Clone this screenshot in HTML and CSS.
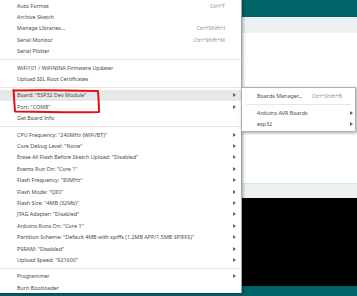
FILE: index.html
```html
<!DOCTYPE html>
<html lang="en">
<head>
    <meta charset="UTF-8">
    <meta name="viewport" content="width=device-width, initial-scale=1.0">
    <title>Tools menu</title>
    <link rel="stylesheet" href="styles.css">
</head>
<body>
    <!-- IDE window behind the menus -->
    <div class="app">
        <div class="app-header"></div>
        <div class="app-toolbar"></div>
        <div class="app-editor"></div>
        <div class="app-console-bar"></div>
        <div class="app-console"></div>
        <div class="app-status"></div>
    </div>

    <!-- Tools menu -->
    <div class="menu main-menu">
        <div class="item"><span class="label">Auto Format</span><span class="shortcut">Ctrl+T</span><span class="arrow"></span></div>
        <div class="item"><span class="label">Archive Sketch</span><span class="arrow"></span></div>
        <div class="item"><span class="label">Manage Libraries...</span><span class="shortcut">Ctrl+Shift+I</span><span class="arrow"></span></div>
        <div class="item"><span class="label">Serial Monitor</span><span class="shortcut">Ctrl+Shift+M</span><span class="arrow"></span></div>
        <div class="item"><span class="label">Serial Plotter</span><span class="arrow"></span></div>
        <div class="separator"></div>
        <div class="item"><span class="label">WiFi101 / WiFiNINA Firmware Updater</span><span class="arrow"></span></div>
        <div class="item"><span class="label">Upload SSL Root Certificates</span><span class="arrow"></span></div>
        <div class="separator"></div>
        <div class="item active"><span class="label">Board: "ESP32 Dev Module"</span><span class="arrow sub"></span></div>
        <div class="item"><span class="label">Port: "COM8"</span><span class="arrow sub"></span></div>
        <div class="item"><span class="label">Get Board Info</span><span class="arrow"></span></div>
        <div class="separator"></div>
        <div class="item"><span class="label">CPU Frequency: "240MHz (WiFi/BT)"</span><span class="arrow sub"></span></div>
        <div class="item"><span class="label">Core Debug Level: "None"</span><span class="arrow sub"></span></div>
        <div class="item"><span class="label">Erase All Flash Before Sketch Upload: "Disabled"</span><span class="arrow sub"></span></div>
        <div class="item"><span class="label">Events Run On: "Core 1"</span><span class="arrow sub"></span></div>
        <div class="item"><span class="label">Flash Frequency: "80MHz"</span><span class="arrow sub"></span></div>
        <div class="item"><span class="label">Flash Mode: "QIO"</span><span class="arrow sub"></span></div>
        <div class="item"><span class="label">Flash Size: "4MB (32Mb)"</span><span class="arrow sub"></span></div>
        <div class="item"><span class="label">JTAG Adapter: "Disabled"</span><span class="arrow sub"></span></div>
        <div class="item"><span class="label">Arduino Runs On: "Core 1"</span><span class="arrow sub"></span></div>
        <div class="item"><span class="label">Partition Scheme: "Default 4MB with spiffs (1.2MB APP/1.5MB SPIFFS)"</span><span class="arrow sub"></span></div>
        <div class="item"><span class="label">PSRAM: "Disabled"</span><span class="arrow sub"></span></div>
        <div class="item"><span class="label">Upload Speed: "921600"</span><span class="arrow sub"></span></div>
        <div class="separator"></div>
        <div class="item"><span class="label">Programmer</span><span class="arrow sub"></span></div>
        <div class="item"><span class="label">Burn Bootloader</span><span class="arrow"></span></div>
    </div>

    <!-- Board submenu -->
    <div class="menu sub-menu">
        <div class="item"><span class="label">Boards Manager...</span><span class="shortcut">Ctrl+Shift+B</span><span class="arrow"></span></div>
        <div class="separator"></div>
        <div class="item"><span class="label">Arduino AVR Boards</span><span class="arrow sub"></span></div>
        <div class="item"><span class="label">esp32</span><span class="arrow sub"></span></div>
    </div>

    <!-- red marker drawn over the screenshot -->
    <svg class="annotation" width="357" height="296" viewBox="0 0 357 296">
        <path d="M14 90.5 C40 90 75 90.5 98 91 C98.5 98 99 105 99 112 C75 112.5 40 112 15 111.5 C14.5 104 14 97 13.5 90" fill="none" stroke="#e3101c" stroke-width="2" stroke-linecap="round" stroke-linejoin="round"/>
    </svg>
</body>
</html>
```

FILE: styles.css
```css
body {
    margin: 0;
    width: 357px;
    height: 296px;
    overflow: hidden;
    position: relative;
    font-family: "Noto Sans", "Open Sans", sans-serif;
    background-color: #fff;
}

/* IDE background */
.app {
    display: flex;
    flex-direction: column;
    height: 296px;
}

.app-header {
    height: 17px;
    background-color: #006468;
}

.app-toolbar {
    height: 16px;
    background-color: #ecf1f1;
}

.app-editor {
    height: 150px;
    background-color: #fff;
}

.app-console-bar {
    height: 14px;
    background-color: #ecf1f1;
    border-top: 1px solid #dde4e4;
}

.app-console {
    height: 88px;
    background-color: #000;
}

.app-status {
    height: 10px;
    background-color: #006468;
}

/* menus */
.menu {
    position: absolute;
    background-color: #fff;
    box-shadow: 1px 1px 3px rgba(0,0,0,0.35);
    font-size: 5.4px;
    color: #4a4a4a;
}

.main-menu {
    left: 0;
    top: 0;
    width: 241px;
    border-right: 1px solid #a3a3a3;
}

.sub-menu {
    left: 241px;
    top: 87px;
    width: 113px;
    padding: 2.5px 0 1.5px;
    border: 1px solid #b0b0b0;
}

.item {
    display: flex;
    align-items: center;
    height: 11.4px;
    padding: 0 3px 0 17px;
    white-space: nowrap;
}

.sub-menu .item {
    padding: 0 0 0 15px;
}

.item.active {
    background-color: #e8e8e8;
}

.label {
    flex: 1;
}

.shortcut {
    color: #929292;
}

.arrow {
    width: 10px;
    height: 11px;
    position: relative;
    margin-left: 3px;
}

.arrow.sub::after {
    content: "";
    position: absolute;
    left: 5px;
    top: 3.5px;
    border-left: 3px solid #666;
    border-top: 2px solid transparent;
    border-bottom: 2px solid transparent;
}

.separator {
    height: 5px;
    position: relative;
}

.separator::after {
    content: "";
    position: absolute;
    left: 0;
    right: 0;
    top: 2px;
    border-top: 1px solid #e6e6e6;
}

.sub-menu .separator::after {
    left: 4px;
    right: 4px;
}

.annotation {
    position: absolute;
    left: 0;
    top: 0;
    pointer-events: none;
}
```
